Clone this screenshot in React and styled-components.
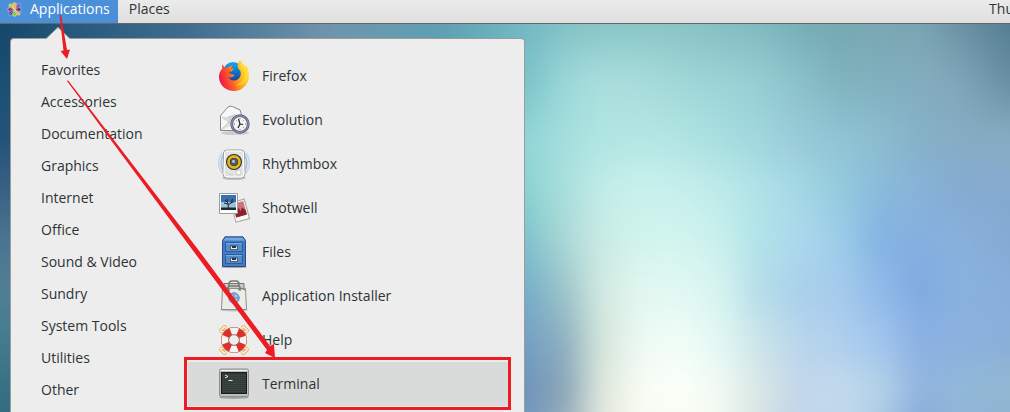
import React from "react";
import styled, { createGlobalStyle } from "styled-components";

const Global = createGlobalStyle`
  *, *::before, *::after { box-sizing: border-box; }
  body { margin: 0; font-family: "Open Sans", "Noto Sans", sans-serif; font-size: 14px; color: #2e3436; overflow: hidden; }
`;

const Desktop = styled.div`
  position: relative;
  min-height: 100vh;
  overflow: hidden;
  background: #7fa9b8;
`;

const Backdrop = styled.svg`
  position: absolute;
  inset: 0;
  width: 100%;
  height: 100%;
`;

const TopBar = styled.header`
  position: relative;
  display: flex;
  height: 24px;
  background: linear-gradient(#ebebeb, #dfdfdf);
  border-bottom: 1px solid #666;
`;

const BarButton = styled.button`
  display: flex;
  align-items: center;
  gap: 8px;
  height: 23px;
  padding: 0 8px 5px ${(p) => (p.$active ? "7px" : "11px")};
  border: 0;
  background: ${(p) => (p.$active ? "#4a90d9" : "transparent")};
  color: ${(p) => (p.$active ? "#fff" : "#2e3436")};
  font: inherit;
  line-height: 18px;
  white-space: nowrap;
`;

const Clock = styled(BarButton)`
  margin-left: auto;
  margin-right: -4px;
  padding: 0 0 5px;
`;

const Menu = styled.main`
  position: relative;
  display: flex;
  width: 515px;
  min-height: calc(100vh - 38px);
  margin: 14px 0 0 10px;
  padding-top: 15px;
  background: #ededed;
  border: 1px solid #9c9c9c;
  border-bottom: 0;
  border-radius: 4px 4px 0 0;
`;

const Pointer = styled.svg`
  position: absolute;
  left: 34px;
  top: -12px;
`;

const Categories = styled.nav`
  display: flex;
  flex-direction: column;
  width: 177px;
`;

const Category = styled.button`
  height: 32px;
  padding: 0 0 2px 30px;
  border: 0;
  background: none;
  color: inherit;
  font: inherit;
  text-align: left;
`;

const Apps = styled.section`
  display: flex;
  flex-direction: column;
  flex: 1;
  padding-right: 16px;
`;

const AppItem = styled.button`
  display: flex;
  align-items: center;
  gap: 12px;
  height: 44px;
  padding: 0 0 0 30px;
  border: 0;
  background: ${(p) => (p.$selected ? "#d9dbda" : "transparent")};
  color: inherit;
  font: inherit;
  text-align: left;
`;

const AppName = styled.span`
  padding-bottom: 2px;
`;

const Annotations = styled.svg`
  position: absolute;
  left: 0;
  top: 0;
  pointer-events: none;
`;

const columns = [0, 60, 190, 330, 440, 525, 565, 600, 640, 680, 720, 760, 800, 840, 880, 920, 960, 1010];
const rows = [
  [24, "#134669 #235679 #416e90 #7095ae #5ea0b2 #73b8c3 #82c1c5 #88c5c7 #8ac6c6 #89c4c5 #85bfc3 #7fb9bf #77afb6 #74a9b1 #7aa7b3 #7aa5b3 #6a92a4 #567e92"],
  [80, "#1b4e72 #2b5a7f #416e90 #7095ae #5ea0b2 #79c4c9 #9bd7d8 #a9dedd #a8dcdc #a0d7d7 #9bd3d6 #95cdd2 #8bc1ca #7fb3bd #80b0be #84adbe #80a6b8 #668da1"],
  [140, "#235279 #2b5a7f #45708f #3f708b #5796ae #92d7d7 #a4dfde #b0e5e2 #b5e8e4 #b1e5e3 #a9dfe0 #a1d7de #99cbd8 #92c5d5 #8cbdcf #85b1c8 #87adc5 #88aec4"],
  [190, "#3b6285 #2b5a7f #45708f #3f708b #5796ae #8bd3d3 #a9dfdb #c2ece7 #caf1ee #c7efec #bdebe9 #b0e2e8 #a4d8e4 #94cbdd #8abbdc #88b3d8 #85abd1 #86aad0"],
  [240, "#4b7591 #4b7591 #45708f #3f708b #5796ae #7ec2cb #aad8d6 #c9eae4 #d0f4ec #d2f5ef #c9f0ed #b0e3e8 #add8ed #9dcdea #83b3e2 #85afdf #88b1dc #84abd2"],
  [290, "#517f95 #517f95 #45708f #3f708b #5796ae #76aeca #9dc5c9 #d1e8e0 #e2f7f0 #e1f9f3 #d5f4f0 #b5dcea #a9d0eb #a5cbed #91bae8 #7faae1 #8ab2df #88afdb"],
  [340, "#437c8d #437c8d #45708f #3f708b #5796ae #739fc4 #8eb1c1 #d2e4da #edf9f3 #f1fdf7 #e1f8f3 #c9e4ea #b8d5ec #afcfed #a1c5ee #8bb1e4 #8bb1de #8aafd9"],
  [390, "#377084 #377084 #45708f #3f708b #5796ae #6e93bb #8ba5b7 #dce5da #f8fcf3 #fdfffa #f1faf2 #d9e7e5 #c2d7e9 #c3daec #b4d2e8 #92b5df #92b8d9 #93b9d2"],
  [412, "#336c80 #336c80 #45708f #3f708b #5796ae #7295bf #95adb9 #dfe6dc #f8fbf2 #fbfef6 #f0faf0 #d7e3e4 #c0d4e9 #c2d9ed #afcde8 #89add9 #91b7d8 #8fb3d2"],
].map(([y, colors]) => ({ y, colors: colors.split(" ") }));

function Wallpaper() {
  return (
    <Backdrop viewBox="0 0 1010 412" preserveAspectRatio="none" aria-hidden="true">
      <defs>
        {rows.map((row, i) => (
          <React.Fragment key={row.y}>
            <linearGradient id={`tone${i}`} gradientUnits="userSpaceOnUse" x1="0" x2="1010" y1="0" y2="0">
              {columns.map((x, c) => <stop key={x} offset={x / 1010} stopColor={row.colors[c]} />)}
            </linearGradient>
            {i > 0 && (
              <>
                <linearGradient id={`fade${i}`} gradientUnits="userSpaceOnUse" x1="0" x2="0" y1={rows[i - 1].y} y2={row.y}>
                  <stop offset="0" stopColor="#fff" stopOpacity="0" />
                  <stop offset="1" stopColor="#fff" />
                </linearGradient>
                <mask id={`mask${i}`} maskUnits="userSpaceOnUse" x="-60" y="-60" width="1130" height="532">
                  <rect x="-60" y="-60" width="1130" height="532" fill={`url(#fade${i})`} />
                </mask>
              </>
            )}
          </React.Fragment>
        ))}
        <filter id="soften" filterUnits="userSpaceOnUse" x="-60" y="-60" width="1130" height="532" colorInterpolationFilters="sRGB">
          <feGaussianBlur stdDeviation="9" />
        </filter>
      </defs>
      <g filter="url(#soften)">
        {rows.map((row, i) => (
          <rect key={row.y} x="-60" y="-60" width="1130" height="532" fill={`url(#tone${i})`} mask={i ? `url(#mask${i})` : undefined} />
        ))}
      </g>
    </Backdrop>
  );
}

const Icon = ({ children }) => <svg width="32" height="32" viewBox="0 0 32 32" aria-hidden="true">{children}</svg>;

const Logo = () => (
  <svg width="15" height="15" viewBox="0 0 15 15" aria-hidden="true">
    <g stroke="#e8edf5" strokeWidth=".4">
      <path d="M2 2h5v5H2z" fill="#a4cc3c" />
      <path d="M8 2h5v5H8z" fill="#8c2f80" />
      <path d="M2 8h5v5H2z" fill="#2f3a80" />
      <path d="M8 8h5v5H8z" fill="#efa530" />
      <path d="M7.500 0 10 3 7.500 7 5 3z" fill="#f0b93c" />
      <path d="M15 7.500 12 10 8 7.500 12 5z" fill="#504b93" />
      <path d="M7.500 15 5 12 7.500 8 10 12z" fill="#9cc63c" />
      <path d="M0 7.500 3 5 7 7.500 3 10z" fill="#a83a83" />
    </g>
    <path d="M3 3l9 9M12 3l-9 9" stroke="#f4f4f4" strokeWidth=".4" />
  </svg>
);

const Firefox = () => (
  <Icon>
    <defs>
      <linearGradient id="ffBody" x1="1" y1=".15" x2="0" y2=".5">
        <stop offset="0" stopColor="#fff13b" /><stop offset=".4" stopColor="#ffb01c" /><stop offset=".7" stopColor="#ff5a25" /><stop offset="1" stopColor="#f0184f" />
      </linearGradient>
      <linearGradient id="ffGlobe" x1="0" y1="0" x2="0" y2="1"><stop offset="0" stopColor="#12a8ee" /><stop offset="1" stopColor="#123f9e" /></linearGradient>
    </defs>
    <circle cx="15" cy="12" r="10" fill="url(#ffGlobe)" />
    <path d="M4.500 4C4 5.500 4 7 4.200 8.500 2 11 .8 14 1 17.500 1.500 25.500 8 31 16 31s14.800-6.200 15-15c.1-4-1-8-3-11.500.1 1 .1 2-.2 2.800C26.500 5.500 25 4.500 24 3 23 1.800 22.500 1 22 .3 19.500 3 19 6 20.200 8.500c2.400 2 3 4.500 2.400 7-1.200 4-4.600 5.500-7.600 5-2.300-.4-4-1.800-4.600-3.500 1.500 1 3.300.5 4.600-.3 1-.6 1.700-.8 1.200-1.700-.8-1.200-2.700-.8-4.200-1.300-1-.5-1.300-1.300-1-2 1-.2 1.800-.2 2.800.1.200-1.200.8-2 2.800-2.800-1-.4-2.200-.7-3.500-.6.2-1.400 1-2.400 2-3C12 5.400 10 6.300 8.600 7.900 7 7.500 5 6.300 4.500 4z" fill="url(#ffBody)" />
    <path d="M22 1.500c-2 5 4 6 5 12 .8 6-4 10.500-10 12 8 0 13-5 13-12 0-5-4-8-8-12z" fill="#ffe03a" opacity=".7" />
  </Icon>
);

const Evolution = () => (
  <Icon>
    <ellipse cx="17" cy="29" rx="14" ry="2" fill="#000" opacity=".14" />
    <path d="M2.500 26.500V11.500L10 3q2-1.500 4.500-.5L22 6l3 9v11.500z" fill="#f7f7f6" stroke="#85878a" />
    <path d="M4 13l7 5 13-5M3 26l8-8 5 3" fill="#e1e1e0" stroke="#c1c2c1" />
    <path d="M9 13l8-3 6 4-11 4z" fill="#d0d1d0" />
    <circle cx="22" cy="20" r="8.300" fill="#f2f3f5" stroke="#5b5e7c" strokeWidth="2.800" />
    <circle cx="22" cy="20" r="8.300" fill="none" stroke="#9497b8" />
    <path d="M20.500 15 22 20l3 .5M22 20l-2 4" fill="none" stroke="#222" strokeWidth="1.200" />
    <path d="M22 14v1M22 25v1M16 20h1M27 20h1M18 16l.6.6M26 24l-.6-.6M26 16l-.6.6" stroke="#777" />
  </Icon>
);

const Rhythmbox = () => (
  <Icon>
    <g fill="none" stroke="#a4c4e3" strokeWidth="1.500">
      <path d="M4 5Q-3 15 4 25M28 5q7 10 0 20" opacity=".55" /><path d="M6 6q-6 9 0 18M26 6q6 9 0 18" />
    </g>
    <ellipse cx="16" cy="30" rx="12" ry="2" opacity=".18" />
    <path d="M9 2h14q3 0 3.500 3l.5 21q0 4-4 4H9q-4 0-4-4L5.500 5Q6 2 9 2z" fill="#e4e5e3" stroke="#9b9c9a" />
    <path d="M9 3h14q2 0 2.500 2l.5 21q0 3-3 3H9q-3 0-3-3L6.500 5Q7 3 9 3z" fill="none" stroke="#fff" />
    <circle cx="16" cy="14" r="8" fill="#272b2f" /><circle cx="16" cy="14" r="5.500" fill="none" stroke="#dfb51b" strokeWidth="2.800" />
    <circle cx="16" cy="14" r="3.500" fill="#555b60" /><circle cx="15.500" cy="13.500" r="1.400" fill="#c5cbd0" />
    <circle cx="20.500" cy="24.500" r="2.500" fill="#fff" stroke="#c4c5c4" /><path d="M7 23q3 4 8 4" stroke="#cfd0ce" fill="none" />
  </Icon>
);

const Shotwell = () => (
  <Icon>
    <g transform="rotate(-15 23 20)"><path d="M15.500 8.500h14v20h-14z" fill="#fbfaf8" stroke="#a4a4a1" /><path d="M17 10h11v14H17z" fill="#cd747b" /><path d="M17 24v-7l2 3 2-6 2 5 2-3 3 3v5z" fill="#8d222f" /></g>
    <path d="M1.500 1.500h18v20h-18z" fill="#fcfcfb" stroke="#999d9c" />
    <path d="M3 3h15v15H3z" fill="#366eae" /><path d="M3 10h15v6H3z" fill="#a0bfd9" /><path d="M3 15.500h15V18H3z" fill="#202a36" />
    <path d="M10.500 17l-.5-6-3-3M10 12l-4-1M10.500 13l3-3 1-3M12 11.500l4-2M9 10V7" fill="none" stroke="#1b2633" />
  </Icon>
);

const Files = () => (
  <Icon>
    <ellipse cx="16" cy="31" rx="13" ry="1.200" opacity=".3" />
    <path d="M4.500 4.500 7 .800h18l2.500 3.700v26h-23z" fill="#477bc1" stroke="#244f8f" />
    <path d="M5.500 4.500 7.500 1.700h17l2 2.800z" fill="#78a5dc" />
    <path d="M7.500 6.500h17v9h-17zM7.500 18.500h17v9h-17z" fill="#568bcd" stroke="#2a5b9e" />
    <path d="M8 7.500h16M8 19.500h16" stroke="#7cabe4" />
    {[11, 23].map((y) => <g key={y}><path d={`M12.500 ${y - 1}h7v3.500h-7z`} fill="#f2f1dd" stroke="#25364b" strokeWidth=".7" /><path d={`M14 ${y - 1}h4v2h-4z`} fill="#1d3551" /></g>)}
  </Icon>
);

const Installer = () => (
  <Icon>
    <ellipse cx="16" cy="30" rx="14" ry="1.500" opacity=".2" />
    <path d="M6 8V3.500h20V8" fill="#c8c9c5" stroke="#73756f" />
    <path d="M4.500 8.500h23l1 21h-25z" fill="#ecece7" stroke="#8e908b" />
    <path d="M11 7V4q0-3 3-3h4q3 0 3 3v3M10 11V8q0-2 2-2h8q2 0 2 2v3" fill="none" stroke="#777973" strokeWidth="1.500" />
    <path d="M5 9l5-1 2 3M20 10l2-2 5 2" fill="none" stroke="#73756f" />
    <circle cx="16" cy="18" r="5.300" fill="#78a5d9" stroke="#6c98cc" /><path d="M13 15h2v2h-2zM17 15h2v2h-2zM13 19h2v2h-2zM17 19h2v2h-2z" fill="#b4cdea" />
  </Icon>
);

const ropes = "M8 7 4 8Q1 6 5 4.500 6 1 8 4M24 7l4 1q3-2-1-3.500Q26 1 24 4M8 25l-4-1q-3 2 1 3.500Q6 31 8 28M24 25l4-1q3 2-1 3.500-1 3.500-3 .5";

const Help = () => (
  <Icon>
    <path d={ropes} fill="none" stroke="#dfa95c" strokeWidth="3.200" />
    <path d={ropes} fill="none" stroke="#fff0cf" strokeWidth="1.600" />
    <circle cx="16" cy="16" r="9" fill="none" stroke="#b0483f" strokeWidth="8" />
    <circle cx="16" cy="16" r="9" fill="none" stroke="#f4f3ef" strokeWidth="7" />
    <circle cx="16" cy="16" r="9" fill="none" stroke="#dd302b" strokeWidth="7" strokeDasharray="7.069" strokeDashoffset="10.600" />
    <circle cx="16" cy="16" r="5.500" fill="none" stroke="#89635c" strokeWidth=".6" />
  </Icon>
);

const Terminal = () => (
  <Icon>
    <ellipse cx="16" cy="29.500" rx="15" ry="1.500" opacity=".25" />
    <rect x="1.500" y="1" width="29" height="27.500" rx="1.500" fill="#bebfbc" stroke="#8d8f8b" />
    <path d="M2.500 2.500h27" stroke="#f2f2f0" /><rect x="3.500" y="4.500" width="25" height="21" fill="#303a38" stroke="#171c1b" />
    {[7, 9, 11, 13, 15, 17, 19, 21, 23].map((y) => <path key={y} d={`M4 ${y}.500h24`} stroke="#3f4b46" strokeWidth=".7" />)}
    <path d="M7 7l3 1.500-3 1.500M10.500 12.500h4" stroke="#e4e8e5" fill="none" />
  </Icon>
);

const categories = ["Favorites", "Accessories", "Documentation", "Graphics", "Internet", "Office", "Sound & Video", "Sundry", "System Tools", "Utilities", "Other"];
const apps = [["Firefox", Firefox], ["Evolution", Evolution], ["Rhythmbox", Rhythmbox], ["Shotwell", Shotwell], ["Files", Files], ["Application Installer", Installer], ["Help", Help], ["Terminal", Terminal]];

export default function App() {
  return (
    <Desktop>
      <Global />
      <Wallpaper />
      <TopBar>
        <BarButton $active><Logo />Applications</BarButton>
        <BarButton>Places</BarButton>
        <Clock>Thu</Clock>
      </TopBar>
      <Menu>
        <Pointer width="26" height="13" viewBox="0 0 26 13" aria-hidden="true">
          <path d="M0 13v-1h1L13 0l12 12h1v1z" fill="#ededed" /><path d="M1 11.500 13 .500l12 11" fill="none" stroke="#9c9c9c" />
        </Pointer>
        <Categories>{categories.map((name) => <Category key={name}>{name}</Category>)}</Categories>
        <Apps>
          {apps.map(([name, Art]) => (
            <AppItem key={name} $selected={name === "Terminal"}><Art /><AppName>{name}</AppName></AppItem>
          ))}
        </Apps>
      </Menu>
      <Annotations width="525" height="412" viewBox="0 0 525 412" aria-hidden="true">
        <rect x="185.500" y="358.500" width="324" height="50" fill="none" stroke="#ed1c24" strokeWidth="3" />
        <path d="M59.500 15h1.500L67 50l3-.500L67 59l-6.500-8 3-.500z" fill="#ed1c24" />
        <path d="M67 81l1-.800L200 252l70 94 4-2 1 14-10-5 2-3-70-94z" fill="#ed1c24" />
      </Annotations>
    </Desktop>
  );
}
